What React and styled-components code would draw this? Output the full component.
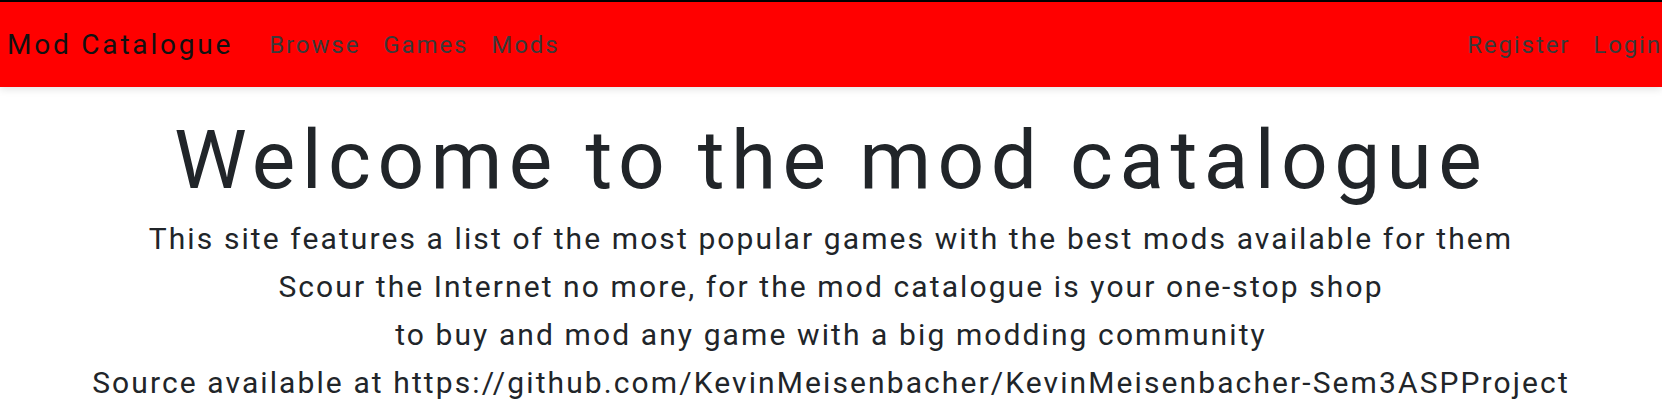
import React from "react";
import styled, { createGlobalStyle } from "styled-components";

const Global = createGlobalStyle`
  html, body { margin: 0; padding: 0; background: #fff; }
  body { font-family: Roboto, "DejaVu Sans", sans-serif; color: #212529; }
  * { box-sizing: border-box; }
`;

const Nav = styled.nav`
  border-top: 2px solid #000;
  background: #ff0000;
  height: 87px;
  display: flex;
  align-items: center;
  justify-content: space-between;
  padding: 0 0 0 7px;
  box-shadow: 0 2px 8px rgba(0, 0, 0, 0.12);
`;

const Left = styled.div`
  display: flex;
  align-items: center;
`;

const Brand = styled.a`
  font-size: 28px;
  letter-spacing: 2.8px;
  color: #111;
  text-decoration: none;
  margin-right: 36px;
`;

const Links = styled.div`
  display: flex;
  align-items: center;
  gap: ${(p) => p.$gap}px;
`;

const NavLink = styled.a`
  font-size: 24px;
  letter-spacing: 1.9px;
  color: #3a3a3a;
  text-decoration: none;
`;

const Main = styled.main`
  text-align: center;
  padding-top: 18px;
`;

const Title = styled.h1`
  margin: 0;
  font-size: 82px;
  font-weight: 400;
  letter-spacing: 6.4px;
  line-height: 110px;
`;

const Line = styled.p`
  margin: 0;
  font-size: 30px;
  letter-spacing: 2.1px;
  line-height: 48px;
`;

export default function App() {
  return (
    <>
      <Global />
      <Nav>
        <Left>
          <Brand href="#">Mod Catalogue</Brand>
          <Links $gap={23}>
            <NavLink href="#">Browse</NavLink>
            <NavLink href="#">Games</NavLink>
            <NavLink href="#">Mods</NavLink>
          </Links>
        </Left>
        <Links $gap={23}>
          <NavLink href="#">Register</NavLink>
          <NavLink href="#">Login</NavLink>
        </Links>
      </Nav>
      <Main>
        <Title>Welcome to the mod catalogue</Title>
        <Line>This site features a list of the most popular games with the best mods available for them</Line>
        <Line>Scour the Internet no more, for the mod catalogue is your one-stop shop</Line>
        <Line>to buy and mod any game with a big modding community</Line>
        <Line>Source available at https://github.com/KevinMeisenbacher/KevinMeisenbacher-Sem3ASPProject</Line>
      </Main>
    </>
  );
}
